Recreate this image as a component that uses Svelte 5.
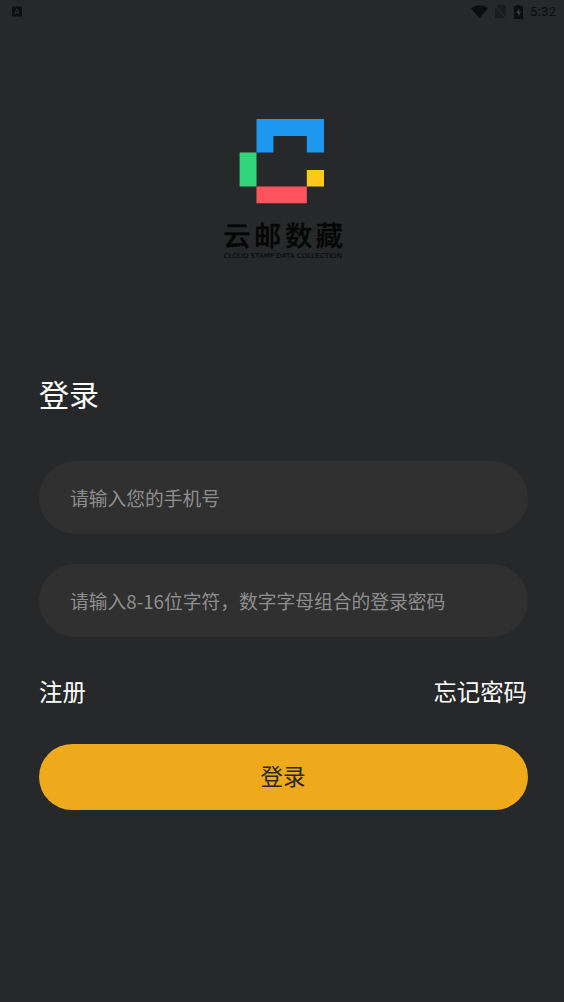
<script>
  let phone = $state('');
  let password = $state('');
</script>

<main class="screen">
  <header class="status">
    <svg class="app-badge" viewBox="0 0 11 11" aria-hidden="true">
      <rect width="11" height="11" rx="1" fill="#0e0f10" />
      <path d="M3.2 8.4 5 2.8h1l1.8 5.6M4 6.6h3" fill="none" stroke="#303234" />
    </svg>
    <div class="indicators">
      <svg width="17" height="13" viewBox="0 0 17 13" aria-hidden="true">
        <path d="M0 3.2C5-.8 12-.8 17 3.2L8.5 13z" fill="#0c0d0e" />
      </svg>
      <svg class="sim" width="11" height="13" viewBox="0 0 11 13" aria-hidden="true">
        <path d="M3.4 0H11v13H0V3.5z" fill="#1b1c1d" />
        <path d="M0 1l11 12" stroke="#2b2d2f" />
      </svg>
      <svg class="battery" width="9" height="14" viewBox="0 0 9 14" aria-hidden="true">
        <path d="M2.5 0h4v1.3H9V14H0V1.3h2.5z" fill="#0c0d0e" />
        <path d="M5.2 3.2 2.2 8h2v3.6L7 6.8H5.2z" fill="#3a3c3e" />
      </svg>
      <span class="time">5:32</span>
    </div>
  </header>

  <div class="brand">
    <svg class="mark" viewBox="0 0 86 85" aria-hidden="true">
      <path d="M17.5 0H85v33.5H67.8V17H34.4v16.5H17.5z" fill="#1e98ee" />
      <path d="M.6 33.5h16.9v34H.6z" fill="#31d67b" />
      <path d="M67.8 51H85v16.5H67.8z" fill="#fdc91a" />
      <path d="M17.5 67.5h50.3v16.8H17.5z" fill="#ff5360" />
    </svg>
    <svg class="wordmark" viewBox="0 0 124 40" role="img" aria-label="云邮数藏">
      <text class="name" x="2.2" y="26" textLength="119.8" lengthAdjust="spacing">云邮数藏</text>
      <text class="latin" x="2.5" y="37.7" textLength="118.5" lengthAdjust="spacingAndGlyphs">CLOUD STAMP DATA COLLECTION</text>
    </svg>
  </div>

  <form onsubmit={(e) => e.preventDefault()}>
    <h1>登录</h1>
    <input type="tel" placeholder="请输入您的手机号" bind:value={phone} />
    <input type="password" placeholder="请输入8-16位字符，数字字母组合的登录密码" bind:value={password} />
    <nav>
      <a href="#register">注册</a>
      <a href="#forgot">忘记密码</a>
    </nav>
    <button type="submit">登录</button>
  </form>
</main>

<style>
  :global(body) {
    margin: 0;
    background: #262829;
  }
  .screen {
    box-sizing: border-box;
    height: 1002px;
    background: #262829;
    color: #fff;
    font-family: 'Noto Sans CJK SC', sans-serif;
    overflow: hidden;
  }
  .status {
    display: flex;
    align-items: center;
    justify-content: space-between;
    box-sizing: border-box;
    height: 23px;
    padding: 0 7px 0 12px;
  }
  .app-badge {
    width: 10px;
    height: 11px;
  }
  .indicators {
    display: flex;
    align-items: center;
  }
  .sim {
    margin-left: 7px;
  }
  .battery {
    margin-left: 8px;
  }
  .time {
    width: 27px;
    margin-left: 7px;
    color: #0c0d0e;
    font: 13px/23px Roboto, sans-serif;
    letter-spacing: 0.3px;
    white-space: nowrap;
  }
  .brand {
    display: flex;
    flex-direction: column;
    align-items: center;
    padding-top: 96px;
  }
  .mark {
    width: 86px;
    height: 85px;
  }
  .wordmark {
    width: 124px;
    height: 40px;
    margin: 16px 0 0 2px;
    overflow: visible;
  }
  .name {
    font: 500 27.2px 'Noto Sans CJK SC', sans-serif;
    fill: #050606;
    stroke: #050606;
    stroke-width: 0.3px;
  }
  .latin {
    font: 6.4px 'DejaVu Sans', sans-serif;
    fill: #050606;
  }
  form {
    display: flex;
    flex-direction: column;
    padding: 111px 36px 0 39px;
  }
  h1 {
    margin: 0 0 46px;
    font-size: 30px;
    font-weight: 400;
    line-height: 44px;
  }
  input {
    box-sizing: border-box;
    width: 100%;
    height: 73px;
    margin: 0 0 30px;
    padding: 0 31px 1px;
    border: 0;
    border-radius: 37px;
    outline: 0;
    background: #303030;
    color: #fff;
    font: 400 18.75px 'Noto Sans CJK SC', sans-serif;
  }
  input::placeholder {
    color: #8e8e8e;
    opacity: 1;
  }
  nav {
    display: flex;
    justify-content: space-between;
    margin-top: 7px;
    font-size: 23.4px;
    line-height: 34px;
  }
  a {
    color: inherit;
    text-decoration: none;
  }
  nav a:last-child {
    margin-right: 1px;
  }
  button {
    height: 66px;
    margin-top: 36px;
    padding: 0 1px 5px 0;
    border: 0;
    border-radius: 33px;
    background: #eeaa1b;
    color: #262829;
    font: 400 22.5px 'Noto Sans CJK SC', sans-serif;
  }
</style>
